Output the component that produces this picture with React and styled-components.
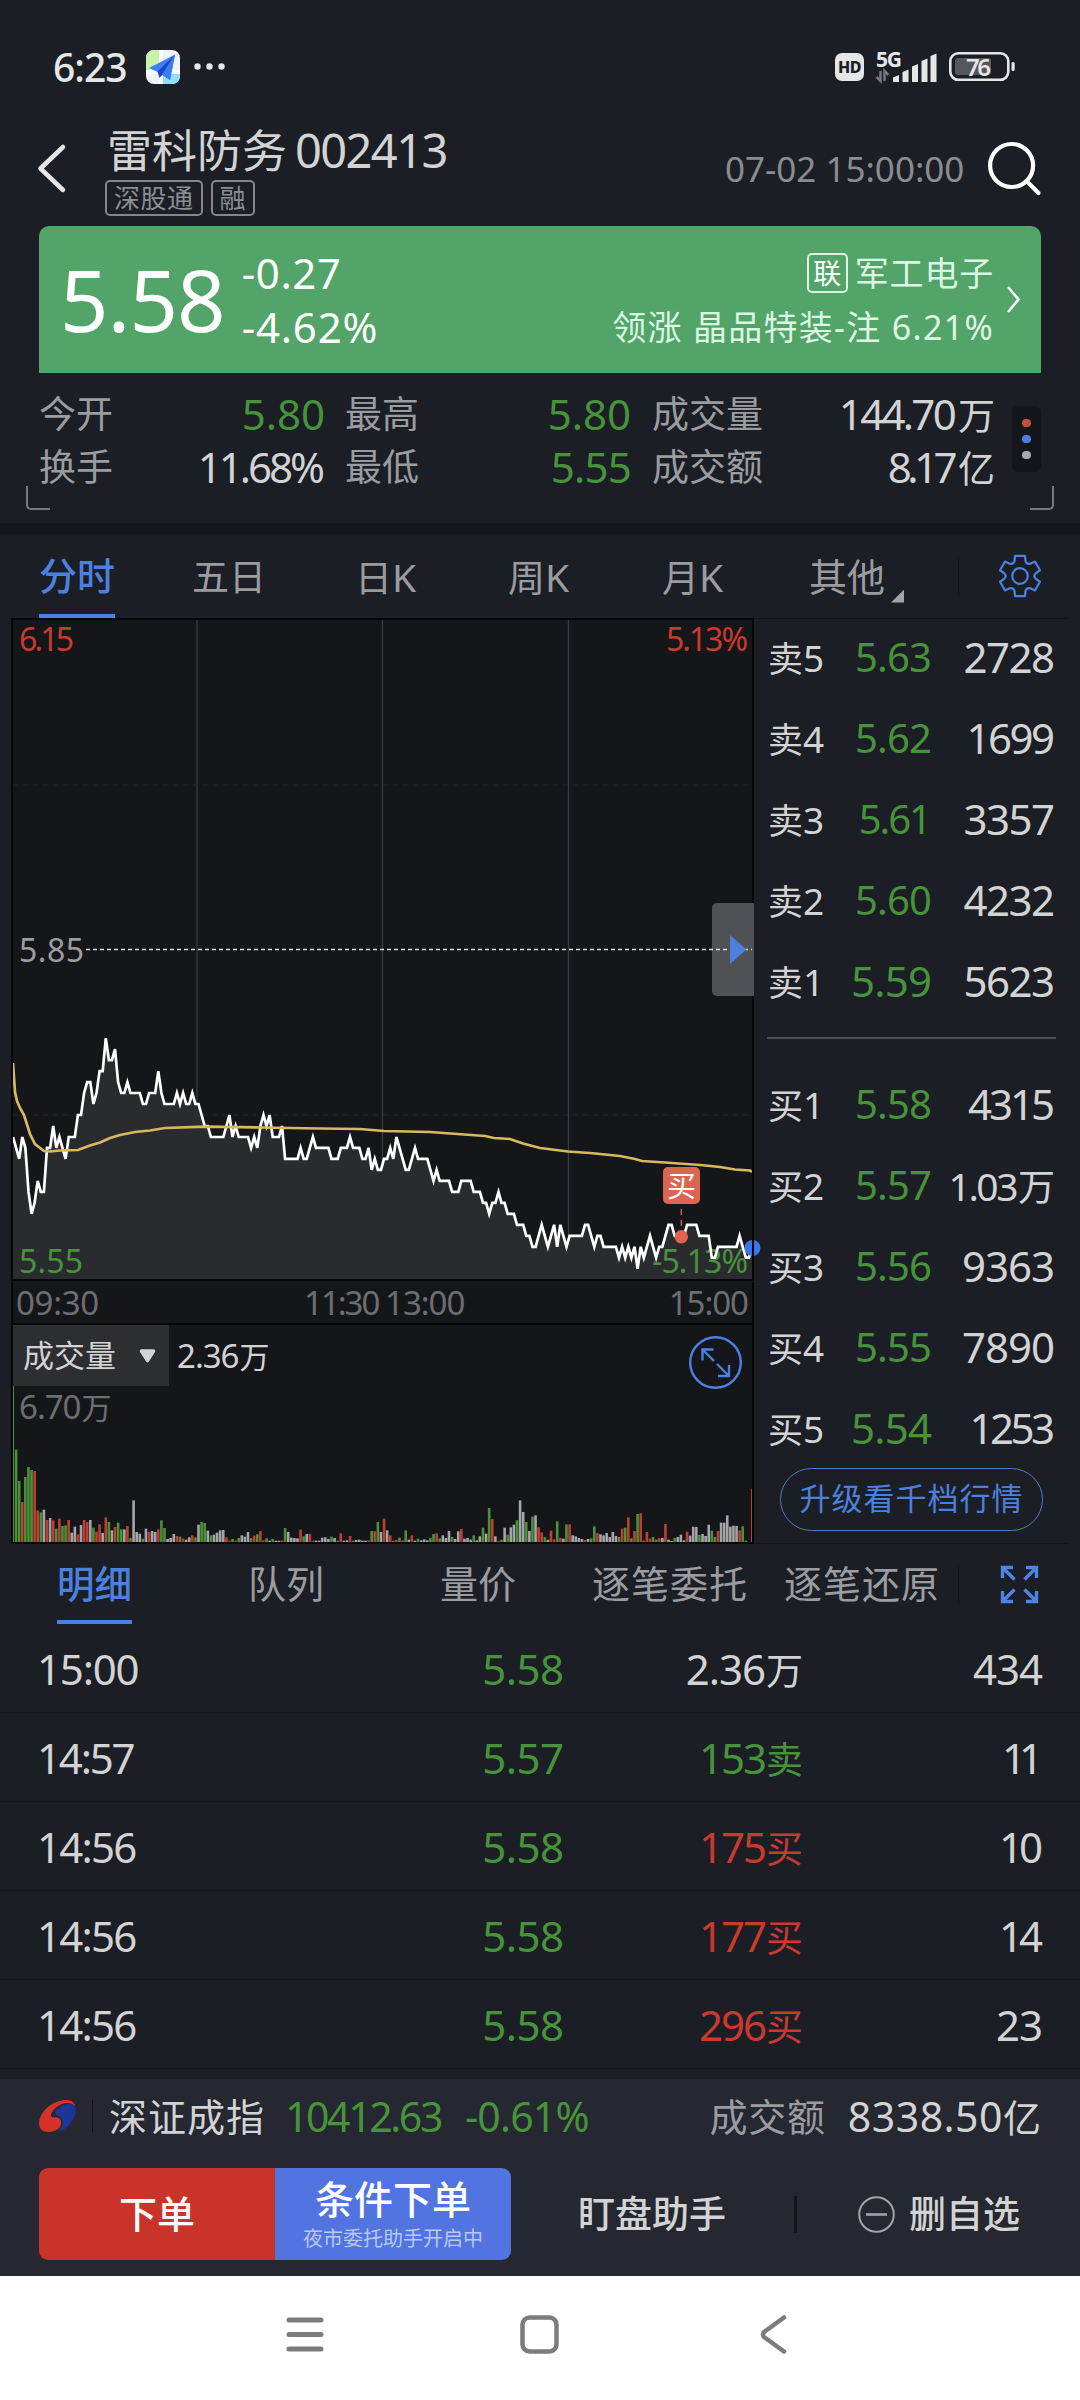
import React from "react";

import styled, { createGlobalStyle } from "styled-components";

const colors = {
  page: "#1b1e25",
  dark: "#15161a",
  line: "#14161a",
  text: "#d3d3d4",
  gray: "#9b9ca0",
  dim: "#6d6e72",
  green: "#47933a",
  red: "#c8392e",
  blue: "#4c80df",
};

const GlobalStyle = createGlobalStyle`
  body {
    margin: 0;
    background: ${colors.page};
    font-family: "Noto Sans", "Noto Sans CJK SC", sans-serif;
  }
  * {
    box-sizing: border-box;
  }
  svg {
    display: block;
    flex: none;
    overflow: visible;
  }
`;

const Phone = styled.div`
  width: 1080px;
  height: 2400px;
  overflow: hidden;
  background: ${colors.page};
`;

const Text = styled.span`
  display: block;
  white-space: pre;
  line-height: 1;
  font-size: ${({ $size }) => $size || 42}px;
  font-weight: ${({ $weight }) => $weight || 400};
  letter-spacing: ${({ $ls }) => $ls || 0}px;
  color: ${({ $color }) => $color || colors.text};
`;

// right aligned, $trim takes back the spacing after the last digit
const Right = styled(Text)`
  justify-self: end;
  margin-right: ${({ $trim, $ls }) => ($trim ? -$ls : 0)}px;
`;

const Han = styled.span`
  font-size: ${({ $size }) => $size || 37}px;
  letter-spacing: 0;
  margin-left: ${({ $gap }) => $gap || 0}px;
`;

/* ---------- status bar ---------- */

const StatusBar = styled.div`
  height: 110px;
  padding: 23px 65px 0 53px;
  display: flex;
  align-items: center;
  justify-content: space-between;
`;

const StatusGroup = styled.div`
  display: flex;
  align-items: center;
  gap: ${({ $gap }) => $gap}px;
`;

const HdBadge = styled.div`
  width: 29px;
  height: 28px;
  border-radius: 7px;
  background: #e6e6e6;
  display: flex;
  align-items: center;
  justify-content: center;
`;

const MapIcon = () => (
  <svg width="34" height="34" viewBox="0 0 34 34">
    <defs>
      <clipPath id="tile">
        <rect width="34" height="34" rx="8" />
      </clipPath>
    </defs>
    <g clipPath="url(#tile)">
      <rect width="34" height="34" fill="#eef3f6" />
      <path d="M0 0H13V12L0 22Z" fill="#c9f2a9" />
      <path d="M0 20H34V24H0Z" fill="#fff" />
      <path d="M13 0H17V34H13Z" fill="#fff" />
      <path d="M17 24H34V34H17Z" fill="#93dcfb" />
      <path d="M29 4.500L3 18L11.500 22L24 30Z" fill="#3f82f5" />
      <path d="M29 4.500L11.500 21.500L13.500 28L16.500 24.500Z" fill="#1b46c8" />
      <path d="M29 4.500L16 24.500L24 30Z" fill="#3b7cf0" />
    </g>
  </svg>
);

const Signal = () => (
  <svg width="61" height="32" viewBox="0 0 61 32">
    <text x="0" y="15.500" fontSize="21" fontWeight="700" fill="#e6e6e6" textLength="26">
      5G
    </text>
    <path d="M4.500 20V30L0.500 26M8.500 30V20L12.500 24" stroke="#77787b" strokeWidth="2.500" fill="none" />
    <path
      d="M17 31V26.500L23 24V31ZM26.500 31V21L32.500 18.500V31ZM36 31V15.500L42 13V31ZM45.500 31V10L51.500 7.500V31ZM54.500 31V5L60.500 2.500V31Z"
      fill="#e6e6e6"
    />
  </svg>
);

const Battery = () => (
  <svg width="66" height="30" viewBox="0 0 66 30">
    <rect x="1.300" y="1.300" width="58" height="26.500" rx="8" fill="none" stroke="#e6e6e6" strokeWidth="2.600" />
    <rect x="6" y="6" width="36" height="17" rx="3" fill="#55575c" />
    <rect x="62.500" y="10" width="3.200" height="9" rx="1.500" fill="#e6e6e6" />
    <text x="17" y="23.500" fontSize="24" fontWeight="600" fill="#e6e6e6" textLength="25">
      76
    </text>
  </svg>
);

/* ---------- title ---------- */

const TitleBar = styled.div`
  height: 116px;
  display: flex;
  padding-left: 38px;
`;

const TitleText = styled.div`
  margin-left: 39px;
  padding-top: 16px;
  width: 621px;
`;

const TitleLine = styled.div`
  height: 48px;
  padding-left: 3px;
  display: flex;
  align-items: center;
  gap: 8px;
`;

const Tags = styled.div`
  display: flex;
  gap: 8px;
  margin: 6px 0 0 1px;
`;

const Tag = styled.div`
  height: 36px;
  padding: 0 7px;
  border: 2px solid #85868a;
  border-radius: 5px;
  display: flex;
  align-items: center;
`;

const TitleSide = styled.div`
  display: flex;
  height: 116px;
  align-items: center;
  gap: 24px;
`;

/* ---------- price card ---------- */

const PriceCard = styled.div`
  margin: 0 39px;
  height: 147px;
  border-radius: 10px 10px 0 0;
  background: #52a468;
  display: flex;
  align-items: center;
  padding: 0 21px 0 21px;
`;

const TwoLines = styled.div`
  display: flex;
  flex-direction: column;
  align-items: ${({ $end }) => ($end ? "flex-end" : "flex-start")};
  margin-left: ${({ $end }) => ($end ? "auto" : "17px")};
`;

const CardLine = styled.div`
  height: 54px;
  display: flex;
  align-items: center;
  gap: 7px;
`;

const LinkBadge = styled.div`
  width: 41px;
  height: 40px;
  border: 2px solid #dcf6e4;
  border-radius: 5px;
  display: flex;
  align-items: center;
  justify-content: center;
`;

const CardArrow = styled.svg`
  margin-left: 13px;
`;

/* ---------- stats ---------- */

const Stats = styled.div`
  height: 150px;
  padding: 14px 26px 0 39px;
  display: flex;
`;

const StatsGrid = styled.div`
  height: 106px;
  display: grid;
  grid-template-columns: 90px 196px 20px 110px 176px 21px 112px 231px;
  grid-template-rows: 53px 53px;
  align-items: center;
`;

const MoreDots = styled.div`
  width: 29px;
  height: 66px;
  margin: 19px 0 0 17px;
  border-radius: 6px;
  background: #14161b;
  display: flex;
  flex-direction: column;
  align-items: center;
  justify-content: center;
  gap: 7.500px;
`;

const Dot = styled.i`
  width: 8.500px;
  height: 8.500px;
  border-radius: 50%;
  background: ${({ $color }) => $color};
`;

const CornerRow = styled.div`
  height: 24px;
  margin: -37px 26px 13px;
  display: flex;
  justify-content: space-between;
`;

const Corner = styled.i`
  width: 24px;
  height: 24px;
  border-bottom: 2.500px solid #77787c;
  border-left: ${({ $right }) => ($right ? "0" : "2.500px solid #77787c")};
  border-right: ${({ $right }) => ($right ? "2.500px solid #77787c" : "0")};
  border-radius: ${({ $right }) => ($right ? "0 0 5px 0" : "0 0 0 5px")};
`;

const Band = styled.div`
  height: 11px;
  background: ${colors.line};
`;

/* ---------- tabs ---------- */

const Tabs = styled.div`
  height: ${({ $height }) => $height}px;
  display: flex;
  padding-left: 39px;
`;

const Tab = styled.div`
  width: ${({ $width }) => $width}px;
  padding-left: ${({ $pad }) => $pad || 0}px;
  padding-bottom: ${({ $lift }) => $lift || 0}px;
  height: 100%;
  display: flex;
  align-items: center;
`;

const TabLabel = styled(Text)`
  height: 100%;
  line-height: ${({ $line }) => $line}px;
  border-bottom: 4px solid ${({ $active }) => ($active ? colors.blue : "transparent")};
`;

const TabCorner = styled.i`
  width: 13px;
  height: 13px;
  margin: 40px 0 0 6px;
  background: #a3a4a7;
  clip-path: polygon(100% 0, 100% 100%, 0 100%);
`;

const VLine = styled.i`
  width: ${({ $width }) => $width || 1}px;
  height: ${({ $height }) => $height}px;
  background: #13151a;
  flex: none;
`;

const gearPath = (() => {
  const at = (deg, r) => {
    const a = (deg * Math.PI) / 180;
    return `${(21 + r * Math.sin(a)).toFixed(2)} ${(21 - r * Math.cos(a)).toFixed(2)}`;
  };
  let d = "";
  for (let t = 0; t < 360; t += 60) {
    d += `${t ? "L" : "M"}${at(t - 20, 16)}L${at(t - 14, 20.8)}L${at(t + 14, 20.8)}L${at(t + 20, 16)}`;
    d += `Q${at(t + 30, 13)} ${at(t + 40, 16)}`;
  }
  return d + "Z";
})();

const Gear = () => (
  <svg width="42" height="42" viewBox="0 0 42 42" fill="none" stroke={colors.blue} strokeWidth="2.200" strokeLinejoin="round">
    <path d={gearPath} />
    <circle cx="21" cy="21" r="7.800" />
  </svg>
);

/* ---------- chart ---------- */

const Board = styled.div`
  display: flex;
  padding-left: 11px;
  height: 926px;
`;

const ChartColumn = styled.div`
  width: 743px;
  background: ${colors.dark};
`;

const TimeAxis = styled.div`
  height: 41px;
  margin-top: 1px;
  border-left: 2px solid #060709;
  border-right: 2px solid #060709;
  padding: 0 4px 0 3px;
  display: grid;
  grid-template-columns: 288px 81px 1fr auto;
  align-items: center;
`;

// cents above the lower limit, one value per minute
const prices = [
  13, 12, 11, 13, 12, 8, 6, 7, 9, 8, 8, 12, 12, 14, 12, 13, 12, 11, 13, 13, 13, 15, 15, 17, 18, 18, 16, 17, 19, 19,
  22, 20, 20, 21, 18, 17, 17, 18, 17, 17, 17, 17, 16, 16, 17, 17, 17, 19, 17, 16, 16, 16, 16, 17, 16, 17, 16, 16, 17, 16,
  16, 15, 14, 14, 13, 13, 13, 13, 13, 14, 15, 13, 14, 13, 13, 13, 13, 12, 13, 12, 14, 15, 14, 15, 13, 13, 13, 14, 11, 11,
  11, 11, 11, 12, 11, 11, 12, 13, 12, 12, 12, 12, 12, 11, 11, 11, 12, 12, 12, 13, 12, 12, 12, 11, 11, 12, 10, 11, 10, 10,
  11, 11, 12, 11, 13, 12, 11, 10, 10, 11, 12, 11, 11, 11, 11, 10, 9, 10, 9, 9, 9, 9, 8, 8, 8, 9, 9, 9, 9, 8,
  8, 8, 7, 7, 6, 7, 7, 8, 7, 7, 6, 6, 6, 5, 5, 5, 4, 4, 3, 3, 4, 5, 4, 3, 4, 5, 3, 5, 4, 3,
  4, 4, 4, 4, 4, 5, 5, 4, 3, 4, 4, 3, 3, 3, 3, 3, 2, 3, 2, 3, 2, 3, 1, 3, 2, 3, 4, 3, 2, 3,
  3, 4, 5, 5, 4, 4, 4, 4, 5, 5, 5, 5, 4, 4, 4, 4, 2, 2, 3, 3, 3, 3, 3, 3, 3, 4, 3, 2, 2, 3,
];

const average =
  "2,445 4,474 6,483 9,490 13,497 19,516 24,526 33,533 39,533.5 49,532.5 67,532 79,527.5 89,524.5 99,520 109,517 124,514 139,512.5 154,510 194,508.7 249,509.5 309,510.5 349,511 373,513 419,514 474,518 483,520 499,521 512,525.5 529,530 557,533.5 579,535 609,538 624,541 631,543 654,544.5 689,547 709,549 724,551.5 739,552.5 741,554";

// direction (g: down, r: up, w: flat) and height in thirds of a pixel
const volumes =
  "g468 g277 g183 r120 g195 g225 g216 r213 r95 g89 w97 r66 w72 r65 g40 r70 g48 g50 r66 w28 w46 r23 w51 r66 r60 w66 g43 r31 r53 w27 r74 g60 w35 r45 g58 g38 w38 r48 g12 w125 w30 w25 g10 w40 r30 w33 w30 r38 g65 g42 w9 w12 w24 r18 g16 r10 w7 w14 r20 g14 w52 g60 g57 w34 g20 w22 w28 w35 w36 r14 r4 g9 r4 g12 w20 w16 w30 g12 r19 g23 r33 r5 g11 w4 g9 w4 w4 r5 g42 w30 w13 w12 w11 r37 g17 w24 r24 r4 w4 w4 w13 w14 w9 g16 w12 g4 r26 w4 w5 r18 g4 w6 w7 w4 w4 r5 g33 r32 g60 w30 r70 w35 r20 g4 r6 g13 r5 g35 w7 r20 w4 g10 w5 w8 w5 g12 g24 r26 g11 w20 w12 w33 g15 w9 w32 r39 w10 w12 w7 g20 w5 w17 g43 w25 g102 r69 w17 r4 g7 w43 g22 w44 w52 g65 w125 w90 g60 w33 g76 w80 r44 r29 g15 w7 r34 r8 g62 r13 w10 g53 r53 w20 w17 w12 w9 r6 w9 g11 g47 r27 w23 w20 w27 w15 w30 w18 g15 r40 g43 r74 g11 r33 g84 r86 g4 r30 r10 g15 g7 r12 w12 r54 w7 w3 g12 w15 w22 w5 r31 w19 w46 w45 g21 w24 w18 w52 g34 g15 r33 w58 w58 w80 w46 w49 w48 r35 g47 g4 g0 r160".split(
    " "
  );

const barColors = { g: "#4a9138", r: "#bd4032", w: "#a4a5a8" };

const STEP = 739 / 239;

const PriceChart = () => {
  const line = prices.map((p, i) => `${(2 + i * STEP).toFixed(1)},${(661.7 - p * 10.98).toFixed(1)}`).join(" ");
  return (
    <svg width="743" height="663" viewBox="0 0 743 663" fontSize="32">
      <path d="M186 2V661M371.500 2V661M557.500 2V661" stroke="#3a3b40" strokeWidth="1.300" />
      <path d="M2 167H741M2 497H741" stroke="#26272b" strokeWidth="1" strokeDasharray="5 5" />
      <polygon points={`2,661 ${line} 741,661`} fill="#2a2b2f" />
      <text x="8" y="654.500" fill={colors.green} textLength="64">5.55</text>
      <text x="641" y="654.500" fill={colors.green} textLength="96">-5.13%</text>
      <polyline points={line} fill="none" stroke="#fff" strokeWidth="2.700" />
      <polyline points={average} fill="none" stroke="#d9b95f" strokeWidth="2.700" />
      <rect x="1" y="1" width="741" height="661" fill="none" stroke="#060709" strokeWidth="2" />
      <path d="M706 285H743V378H706a5 5 0 0 1-5-5V290a5 5 0 0 1 5-5Z" fill="#505154" />
      <path d="M75 331.500H741" stroke="#dcdcdc" strokeWidth="1.400" strokeDasharray="4 3" />
      <path d="M719 317L735.500 331.500L719 346Z" fill={colors.blue} />
      <text x="8" y="32.500" fill={colors.red} textLength="55">6.15</text>
      <text x="655" y="32.500" fill={colors.red} textLength="82">5.13%</text>
      <text x="8" y="343.500" fill={colors.gray} textLength="65">5.85</text>
      <rect x="652" y="549" width="37" height="37" rx="5" fill="#db6550" />
      <text x="656" y="578.500" fontSize="29" fill="#fff">买</text>
      <path d="M670.300 591V613" stroke="#c45a48" strokeWidth="1.500" strokeDasharray="6 5" />
      <circle cx="670.300" cy="618.700" r="6.700" fill="#e0644e" />
      <circle cx="741.500" cy="630" r="8" fill="#3b73ea" />
      <path d="M742 620V640" stroke="#060709" strokeWidth="2" />
    </svg>
  );
};

const VolumePanel = styled.div`
  height: 221px;
  border: 2px solid #060709;
  position: relative;
`;

const VolumeHead = styled.div`
  height: 61px;
  display: flex;
  align-items: center;
`;

const VolumeSelect = styled.div`
  width: 156px;
  height: 61px;
  padding: 0 13px 0 10px;
  margin-right: 8px;
  background: #2d2e32;
  display: flex;
  align-items: center;
  justify-content: space-between;
`;

const ZoomButton = styled.div`
  margin: 14px 10px 0 auto;
`;

const MaxVolume = styled(Text)`
  margin: 4px 0 0 6px;
`;

const VolumeBars = styled.svg`
  position: absolute;
  left: 0;
  bottom: 0;
`;

const VolumeChart = () => (
  <VolumeBars width="739" height="156" viewBox="0 0 739 156">
    {volumes.map((v, i) => {
      const h = Number(v.slice(1)) / 3;
      const edge = i === 0 || i === volumes.length - 1;
      const x = i === 0 ? 0 : edge ? 738 : i * STEP - 1.3;
      return <rect key={i} x={x} y={156 - h} width={edge ? 1 : 2.6} height={h} fill={barColors[v[0]]} />;
    })}
  </VolumeBars>
);

/* ---------- order book ---------- */

const Book = styled.div`
  width: 315px;
  border-top: 1px solid ${colors.line};
  border-bottom: 1px solid ${colors.line};
`;

const BookRow = styled.div`
  height: 81px;
  padding: 0 0 5px 14px;
  display: grid;
  grid-template-columns: 56px 108px 123px;
  align-items: center;
`;

const BookDivider = styled.div`
  height: 2px;
  margin: 13px 13px 27px;
  background: #4b4e54;
`;

const Upgrade = styled.div`
  width: 263px;
  height: 63px;
  margin: -3px 0 0 26px;
  padding-bottom: 2px;
  border: 1.500px solid #5079c6;
  border-radius: 32px;
  display: flex;
  align-items: center;
  justify-content: center;
`;

const sells = [
  { side: "卖", level: 5, price: "5.63", qty: "2728" },
  { side: "卖", level: 4, price: "5.62", qty: "1699", qls: -2.5 },
  { side: "卖", level: 3, price: "5.61", qty: "3357", pls: -2 },
  { side: "卖", level: 2, price: "5.60", qty: "4232" },
  { side: "卖", level: 1, price: "5.59", qty: "5623", psize: 42 },
];

const buys = [
  { side: "买", level: 1, price: "5.58", qty: "4315", qls: -3 },
  { side: "买", level: 2, price: "5.57", qty: "1.03", unit: "万", qsize: 39, qls: -2.5 },
  { side: "买", level: 3, price: "5.56", qty: "9363", qls: -1 },
  { side: "买", level: 4, price: "5.55", qty: "7890", qls: -1 },
  { side: "买", level: 5, price: "5.54", qty: "1253", qls: -3.5, psize: 42 },
];

const Order = ({ side, level, price, qty, unit, psize = 40, pls = -0.8, qsize = 42, qls = -1.5 }) => (
  <BookRow>
    <Text $size={37}>
      <Han $size={35}>{side}</Han>
      {level}
    </Text>
    <Right $size={psize} $ls={pls} $trim $color={colors.green}>
      {price}
    </Right>
    <Right $size={qsize} $ls={qls} $trim={!unit}>
      {qty}
      {unit && <Han $gap={2}>{unit}</Han>}
    </Right>
  </BookRow>
);

/* ---------- trades ---------- */

const TradeRow = styled.div`
  height: 89px;
  padding: 1px 37px 0 37px;
  border-bottom: 1px solid #16181d;
  display: grid;
  grid-template-columns: 200px 327px 239px 1fr;
  align-items: center;
`;

const trades = [
  { time: "15:00", ls: -1.2, price: "5.58", volume: "2.36", side: "万", color: colors.text, count: "434" },
  { time: "14:57", ls: -2.2, price: "5.57", volume: "153", side: "卖", color: colors.green, count: "11", countLs: -7 },
  { time: "14:56", ls: -1.8, price: "5.58", volume: "175", side: "买", color: colors.red, count: "10", countLs: -4 },
  { time: "14:56", ls: -1.8, price: "5.58", volume: "177", side: "买", color: colors.red, count: "14", countLs: -4 },
  { time: "14:56", ls: -1.8, price: "5.58", volume: "296", side: "买", color: colors.red, count: "23" },
];

/* ---------- bottom ---------- */

const Bottom = styled.div`
  height: 197px;
  margin-top: 10px;
  background: #252731;
`;

const IndexRow = styled.div`
  height: 76px;
  padding: 0 39px 2px;
  display: flex;
  align-items: center;
`;

const Spacer = styled.i`
  width: ${({ $width }) => $width}px;
  flex: ${({ $width }) => ($width ? "none" : 1)};
`;

const Actions = styled.div`
  height: 92px;
  margin-top: 13px;
  padding-left: 39px;
  display: flex;
  align-items: center;
`;

const ActionLabel = styled(Text)`
  margin-top: -2px;
`;

const OrderButton = styled.div`
  width: 236px;
  height: 92px;
  padding-bottom: ${({ $blue }) => ($blue ? 0 : 2)}px;
  background: ${({ $blue }) => ($blue ? "#5174e0" : "#ca3329")};
  border-radius: ${({ $blue }) => ($blue ? "0 9px 9px 0" : "9px 0 0 9px")};
  display: flex;
  flex-direction: column;
  align-items: center;
  justify-content: center;
  gap: 11px;
`;

const NavBar = styled.div`
  height: 124px;
  background: #fff;
  display: flex;
  justify-content: center;
  align-items: center;
  gap: 194px;
  padding: 0 1px 7px 0;
`;

const IndexLogo = () => (
  <svg width="37" height="32" viewBox="0 0 37 32">
    <path
      d="M0 23C1 10 15 0 27 0C32 0 35 2 36.500 6C32 2.500 26 2 21 5C14 9 10 15 13 17C17 17.500 23 17 22 24C21 30 14 32 9 32C3 32 0 29 0 23Z"
      fill="#d23228"
    />
    <path
      d="M36.500 7C38 13 35 19 31 24C28 28 23 31 19 31.500C23 28 25 23 22.500 18.500C20.500 15.500 15 16 16.500 12C19 6.500 27 3 32 4C34 4.500 36 5.500 36.500 7Z"
      fill="#1c3596"
    />
  </svg>
);

const App = () => {
  return (
    <Phone>
      <GlobalStyle />
      <StatusBar>
        <StatusGroup $gap={19}>
          <Text $size={39} $weight={500} $ls={-1} $color="#e6e6e6">
            6:23
          </Text>
          <MapIcon />
          <svg width="31" height="7" viewBox="2 0 31 7" fill="#e6e6e6">
            <circle cx="0.500" cy="3.500" r="3.200" />
            <circle cx="12.500" cy="3.500" r="3.200" />
            <circle cx="24.500" cy="3.500" r="3.200" />
          </svg>
        </StatusGroup>
        <StatusGroup $gap={12}>
          <HdBadge>
            <Text $size={16} $weight={800} $ls={-0.5} $color="#1b1e25">
              HD
            </Text>
          </HdBadge>
          <Signal />
          <Battery />
        </StatusGroup>
      </StatusBar>

      <TitleBar>
        <svg width="27" height="116" viewBox="0 0 27 116">
          <path d="M25 37L2.500 58.500L25 80" fill="none" stroke="#e6e6e6" strokeWidth="4.500" strokeLinecap="round" strokeLinejoin="round" />
        </svg>
        <TitleText>
          <TitleLine>
            <Text $size={45}>雷科防务</Text>
            <Text $size={47} $ls={-1.6}>
              002413
            </Text>
          </TitleLine>
          <Tags>
            <Tag>
              <Text $size={26} $ls={0.5} $color="#8d8e92">
                深股通
              </Text>
            </Tag>
            <Tag>
              <Text $size={26} $color="#8d8e92">
                融
              </Text>
            </Tag>
          </Tags>
        </TitleText>
        <TitleSide>
          <Text $size={35} $color="#8b8c90">
            07-02 15:00:00
          </Text>
          <svg width="53" height="54" viewBox="0 0 53 54" fill="none" stroke="#fff" strokeWidth="4.200">
            <circle cx="23.600" cy="24.500" r="21.500" />
            <path d="M38.500 40L50.500 52" strokeLinecap="round" />
          </svg>
        </TitleSide>
      </TitleBar>

      <PriceCard>
        <Text $size={85} $ls={-1} $color="#fff">
          5.58
        </Text>
        <TwoLines>
          <CardLine>
            <Text $ls={0.6} $color="#fff">
              -0.27
            </Text>
          </CardLine>
          <CardLine>
            <Text $ls={0.8} $color="#fff">
              -4.62%
            </Text>
          </CardLine>
        </TwoLines>
        <TwoLines $end>
          <CardLine>
            <LinkBadge>
              <Text $size={28} $color="#fff">
                联
              </Text>
            </LinkBadge>
            <Text $size={34} $ls={0.8} $color="#dcf6e4">
              军工电子
            </Text>
          </CardLine>
          <CardLine>
            <Text $size={34} $ls={1.3} $color="#dcf6e4">
              领涨 晶品特装-注 6.21%
            </Text>
          </CardLine>
        </TwoLines>
        <CardArrow width="13" height="27" viewBox="0 0 13 27">
          <path d="M1 1L11.500 13.500L1 26" fill="none" stroke="#fff" strokeWidth="2.500" />
        </CardArrow>
      </PriceCard>

      <Stats>
        <StatsGrid>
          <Text $size={37} $color={colors.gray}>今开</Text>
          <Right $color={colors.green}>5.80</Right>
          <i />
          <Text $size={37} $color={colors.gray}>最高</Text>
          <Right $color={colors.green}>5.80</Right>
          <i />
          <Text $size={37} $color={colors.gray}>成交量</Text>
          <Right $ls={-2.7}>
            144.70<Han $gap={4}>万</Han>
          </Right>
          <Text $size={37} $color={colors.gray}>换手</Text>
          <Right $ls={-3} $trim>11.68%</Right>
          <i />
          <Text $size={37} $color={colors.gray}>最低</Text>
          <Right $ls={-0.8} $color={colors.green}>5.55</Right>
          <i />
          <Text $size={37} $color={colors.gray}>成交额</Text>
          <Right $ls={-4.500}>
            8.17<Han $gap={5}>亿</Han>
          </Right>
        </StatsGrid>
        <MoreDots>
          <Dot $color="#bd523c" />
          <Dot $color="#4a80e4" />
          <Dot $color="#a9a9ad" />
        </MoreDots>
      </Stats>
      <CornerRow>
        <Corner />
        <Corner $right />
      </CornerRow>
      <Band />

      <Tabs $height={84}>
        <Tab $width={153}>
          <TabLabel $size={38} $weight={500} $color={colors.blue} $line={83} $active>
            分时
          </TabLabel>
        </Tab>
        <Tab $width={163}>
          <Text $size={37} $color={colors.gray}>五日</Text>
        </Tab>
        <Tab $width={153}>
          <Text $size={39} $color={colors.gray}><Han>日</Han>K</Text>
        </Tab>
        <Tab $width={154}>
          <Text $size={39} $color={colors.gray}><Han>周</Han>K</Text>
        </Tab>
        <Tab $width={147}>
          <Text $size={39} $color={colors.gray}><Han>月</Han>K</Text>
        </Tab>
        <Tab $width={149}>
          <Text $size={38} $color={colors.gray}>其他</Text>
          <TabCorner />
        </Tab>
        <Tab $width={41}>
          <VLine $height={39} />
        </Tab>
        <Tab $width={42}>
          <Gear />
        </Tab>
      </Tabs>

      <Board>
        <ChartColumn>
          <PriceChart />
          <TimeAxis>
            <Text $size={33} $ls={-0.3} $color={colors.dim}>09:30</Text>
            <Text $size={33} $ls={-2} $color={colors.dim}>11:30</Text>
            <Text $size={33} $ls={-1} $color={colors.dim}>13:00</Text>
            <Text $size={33} $ls={-1} $color={colors.dim}>15:00</Text>
          </TimeAxis>
          <VolumePanel>
            <VolumeHead>
              <VolumeSelect>
                <Text $size={31}>成交量</Text>
                <svg width="17" height="14" viewBox="0 0 17 14">
                  <path d="M2.500 2H14.500L8.500 11.500Z" fill={colors.text} stroke={colors.text} strokeWidth="3.500" strokeLinejoin="round" />
                </svg>
              </VolumeSelect>
              <Text $size={33} $ls={-1}>
                2.36<Han $size={30} $gap={1}>万</Han>
              </Text>
              <ZoomButton>
                <svg width="53" height="53" viewBox="0 0 53 53" fill="none" stroke={colors.blue} strokeWidth="2.400">
                  <circle cx="26.500" cy="26.500" r="25.300" />
                  <path d="M25 25L13.500 13.500M13.500 24.500V13.500H24.500M28 28L40 40M40 29V40H29" />
                </svg>
              </ZoomButton>
            </VolumeHead>
            <MaxVolume $size={33} $ls={-1} $color={colors.dim}>
              6.70<Han $size={30} $gap={1}>万</Han>
            </MaxVolume>
            <VolumeChart />
          </VolumePanel>
        </ChartColumn>
        <Book>
          {sells.map((row) => (
            <Order key={row.price} {...row} />
          ))}
          <BookDivider />
          {buys.map((row) => (
            <Order key={row.price} {...row} />
          ))}
          <Upgrade>
            <Text $size={31} $ls={1} $color={colors.blue}>升级看千档行情</Text>
          </Upgrade>
        </Book>
      </Board>

      <Tabs $height={80}>
        <Tab $width={209} $pad={18}>
          <TabLabel $size={37.500} $weight={500} $color={colors.blue} $line={79} $active>
            明细
          </TabLabel>
        </Tab>
        <Tab $width={192} $lift={3}>
          <Text $size={38} $color={colors.gray}>队列</Text>
        </Tab>
        <Tab $width={152} $lift={3}>
          <Text $size={38} $color={colors.gray}>量价</Text>
        </Tab>
        <Tab $width={192} $lift={3}>
          <Text $size={38} $ls={1} $color={colors.gray}>逐笔委托</Text>
        </Tab>
        <Tab $width={174} $lift={3}>
          <Text $size={38} $ls={1} $color={colors.gray}>逐笔还原</Text>
        </Tab>
        <Tab $width={43}>
          <VLine $height={39} />
        </Tab>
        <Tab $width={38}>
          <svg width="37" height="37" viewBox="0 0 37 37" fill="none" stroke="#4d84e6" strokeWidth="3.400">
            <path d="M13.500 13.500L2 2M1.500 12V1.500H12M23.500 13.500L35 2M25 1.500H35.500V12M13.500 23.500L2 35M1.500 25V35.500H12M23.500 23.500L35 35M25 35.500H35.500V25" />
          </svg>
        </Tab>
      </Tabs>
      {trades.map(({ time, ls, price, volume, side, color, count, countLs = -1 }, i) => (
        <TradeRow key={i}>
          <Text $ls={ls}>{time}</Text>
          <Right $ls={-0.5} $trim $color={colors.green}>{price}</Right>
          <Right $ls={side === "万" ? -1 : -2} $color={color}>
            {volume}
            <Han $size={37} $gap={1}>{side}</Han>
          </Right>
          <Right $ls={countLs} $trim>{count}</Right>
        </TradeRow>
      ))}

      <Bottom>
        <IndexRow>
          <IndexLogo />
          <Spacer $width={16} />
          <VLine $height={32} />
          <Spacer $width={16} />
          <Text $size={38} $ls={1}>深证成指</Text>
          <Spacer $width={20} />
          <Text $size={41} $ls={-2.4} $color={colors.green}>10412.63</Text>
          <Spacer $width={24} />
          <Text $size={41} $ls={-0.8} $color={colors.green}>-0.61%</Text>
          <Spacer />
          <Text $size={38} $ls={0.8} $color={colors.gray}>成交额</Text>
          <Spacer $width={22} />
          <Text $size={41} $ls={0.5}>
            8338.50<Han $size={38}>亿</Han>
          </Text>
        </IndexRow>
        <Actions>
          <OrderButton>
            <Text $size={38} $weight={500} $color="#fff">下单</Text>
          </OrderButton>
          <OrderButton $blue>
            <Text $size={39} $weight={500} $color="#fff">条件下单</Text>
            <Text $size={20} $color="#b9c7f5">夜市委托助手开启中</Text>
          </OrderButton>
          <Spacer $width={67} />
          <ActionLabel $size={37} $weight={500}>盯盘助手</ActionLabel>
          <Spacer $width={68} />
          <VLine $height={37} $width={3} />
          <Spacer $width={61} />
          <svg width="37" height="37" viewBox="0 0 37 37" fill="none" stroke="#a3a4a8" strokeWidth="2">
            <circle cx="18.500" cy="18.500" r="17.300" />
            <path d="M8 18.500H29" strokeWidth="2.600" />
          </svg>
          <Spacer $width={14} />
          <ActionLabel $size={37} $weight={500}>删自选</ActionLabel>
        </Actions>
      </Bottom>
      <NavBar>
        <svg width="42" height="39" viewBox="0 0 42 39" stroke="#7c7c7c" strokeWidth="5" strokeLinecap="round">
          <path d="M5 5H37M5 19.500H37M5 34H37" />
        </svg>
        <svg width="39" height="39" viewBox="0 0 39 39">
          <rect x="2.500" y="2.500" width="34" height="34" rx="7" fill="none" stroke="#7c7c7c" strokeWidth="4.500" />
        </svg>
        <svg width="42" height="39" viewBox="0 0 42 39" fill="none" stroke="#7c7c7c" strokeWidth="4.500" strokeLinecap="round" strokeLinejoin="round">
          <path d="M31 2.500L11 17Q9 19.500 11 22L31 36.500" />
        </svg>
      </NavBar>
    </Phone>
  );
};

export default App;
